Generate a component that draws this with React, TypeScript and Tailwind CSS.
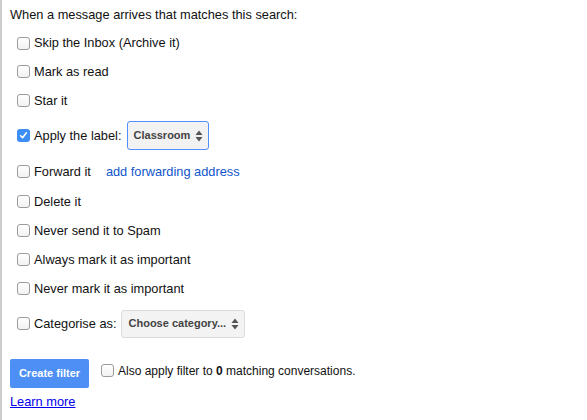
import React from "react";

function Box({ checked = false }: { checked?: boolean }) {
  if (checked) {
    return (
      <span className="flex h-[13px] w-[13px] shrink-0 items-center justify-center rounded-[3px] bg-[#3d8ef7]">
        <svg width="9" height="9" viewBox="0 0 9 9">
          <path d="M1.6 4.8 L3.6 6.8 L7.4 1.8" fill="none" stroke="#fff" strokeWidth="1.6" strokeLinecap="round" strokeLinejoin="round" />
        </svg>
      </span>
    );
  }
  return (
    <span className="block h-[13px] w-[13px] shrink-0 rounded-[3px] border border-[#9b9b9b] bg-gradient-to-b from-white to-[#f2f2f2]" />
  );
}

function Arrows() {
  return (
    <svg width="8" height="12" viewBox="0 0 8 12" className="shrink-0">
      <path d="M4 0.5 L7.5 5 L0.5 5 Z" fill="#555" />
      <path d="M4 11.5 L7.5 7 L0.5 7 Z" fill="#555" />
    </svg>
  );
}

function Row({ children, h = "h-[29px]" }: { children: React.ReactNode; h?: string }) {
  return <div className={`flex items-center pl-[15px] ${h}`}>{children}</div>;
}

function Label({ text, checked }: { text: string; checked?: boolean }) {
  return (
    <>
      <Box checked={checked} />
      <span className="ml-[4px]">{text}</span>
    </>
  );
}

export default function App() {
  return (
    <div
      className="h-[420px] w-[587px] border-l-2 border-[#cdcdcd] bg-white text-[12.8px] text-[#111]"
      style={{ fontFamily: '"Liberation Sans", Arial, sans-serif' }}
    >
      <div className="flex h-[29px] items-center pl-[8px]">When a message arrives that matches this search:</div>
      <Row h="h-[28px]"><Label text="Skip the Inbox (Archive it)" /></Row>
      <Row><Label text="Mark as read" /></Row>
      <Row><Label text="Star it" /></Row>
      <Row h="h-[41px]">
        <Label text="Apply the label:" checked />
        <div className="ml-[5px] flex h-[29px] w-[82px] items-center justify-between rounded-[3px] border border-[#4d90fe] bg-[#f2f2f2] pl-[6px] pr-[5px] text-[11px] font-bold text-[#444]">
          <span>Classroom</span>
          <Arrows />
        </div>
      </Row>
      <Row h="h-[31px]">
        <Label text="Forward it" />
        <span className="ml-[15px] text-[#1155cc]">add forwarding address</span>
      </Row>
      <Row><Label text="Delete it" /></Row>
      <Row><Label text="Never send it to Spam" /></Row>
      <Row><Label text="Always mark it as important" /></Row>
      <Row><Label text="Never mark it as important" /></Row>
      <Row h="h-[41px]">
        <Label text="Categorise as:" />
        <div className="ml-[4px] flex h-[28px] w-[124px] items-center justify-between rounded-[3px] border border-[#dcdcdc] bg-[#f3f3f3] pl-[7px] pr-[5px] text-[11px] font-bold text-[#444]">
          <span>Choose category...</span>
          <Arrows />
        </div>
      </Row>
      <div className="mt-[15px] flex items-center pl-[8px]">
        <div className="flex h-[29px] w-[79px] items-center justify-center rounded-[2px] bg-[#4d8ff4] text-[11px] font-bold text-white">
          Create filter
        </div>
        <div className="ml-[12px] mt-[-6px] flex items-center">
          <Box />
          <span className="ml-[4px] text-[12px]">
            Also apply filter to <b>0</b> matching conversations.
          </span>
        </div>
      </div>
      <div className="mt-[6px] pl-[8px] leading-[16px]">
        <span className="text-[#0000ee] underline">Learn more</span>
      </div>
    </div>
  );
}
